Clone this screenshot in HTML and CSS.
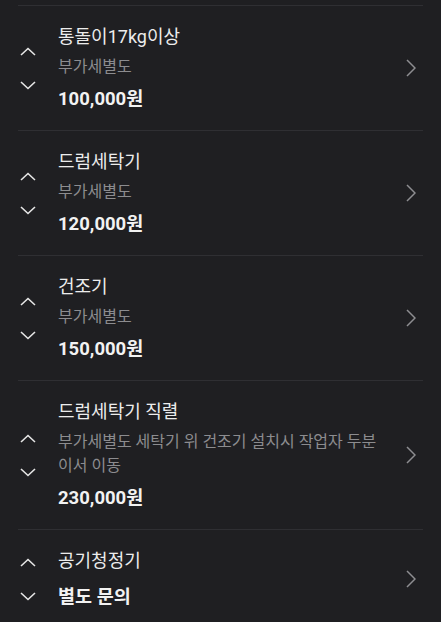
FILE: index.html
```html
<!DOCTYPE html>
<html lang="ko">
<head>
  <meta charset="UTF-8">
  <title>옵션 목록</title>
  <link rel="stylesheet" href="styles.css">
</head>
<body>

  <!-- Option list -->
  <div class="list">

    <div class="item">
      <div class="arrows">
        <svg class="updown" viewBox="0 0 16 9"><path d="M1 8 L8 1.5 L15 8"/></svg>
        <svg class="updown" viewBox="0 0 16 9"><path d="M1 1 L8 7.5 L15 1"/></svg>
      </div>
      <div class="info">
        <div class="name">통돌이17kg이상</div>
        <div class="note">부가세별도</div>
        <div class="price">100,000원</div>
      </div>
      <div class="go">
        <svg viewBox="0 0 10 18"><path d="M1 1 L9 9 L1 17"/></svg>
      </div>
    </div>

    <div class="item">
      <div class="arrows">
        <svg class="updown" viewBox="0 0 16 9"><path d="M1 8 L8 1.5 L15 8"/></svg>
        <svg class="updown" viewBox="0 0 16 9"><path d="M1 1 L8 7.5 L15 1"/></svg>
      </div>
      <div class="info">
        <div class="name">드럼세탁기</div>
        <div class="note">부가세별도</div>
        <div class="price">120,000원</div>
      </div>
      <div class="go">
        <svg viewBox="0 0 10 18"><path d="M1 1 L9 9 L1 17"/></svg>
      </div>
    </div>

    <div class="item">
      <div class="arrows">
        <svg class="updown" viewBox="0 0 16 9"><path d="M1 8 L8 1.5 L15 8"/></svg>
        <svg class="updown" viewBox="0 0 16 9"><path d="M1 1 L8 7.5 L15 1"/></svg>
      </div>
      <div class="info">
        <div class="name">건조기</div>
        <div class="note">부가세별도</div>
        <div class="price">150,000원</div>
      </div>
      <div class="go">
        <svg viewBox="0 0 10 18"><path d="M1 1 L9 9 L1 17"/></svg>
      </div>
    </div>

    <div class="item">
      <div class="arrows">
        <svg class="updown" viewBox="0 0 16 9"><path d="M1 8 L8 1.5 L15 8"/></svg>
        <svg class="updown" viewBox="0 0 16 9"><path d="M1 1 L8 7.5 L15 1"/></svg>
      </div>
      <div class="info">
        <div class="name">드럼세탁기 직렬</div>
        <div class="note">부가세별도 세탁기 위 건조기 설치시 작업자 두분이서 이동</div>
        <div class="price">230,000원</div>
      </div>
      <div class="go">
        <svg viewBox="0 0 10 18"><path d="M1 1 L9 9 L1 17"/></svg>
      </div>
    </div>

    <div class="item">
      <div class="arrows">
        <svg class="updown" viewBox="0 0 16 9"><path d="M1 8 L8 1.5 L15 8"/></svg>
        <svg class="updown" viewBox="0 0 16 9"><path d="M1 1 L8 7.5 L15 1"/></svg>
      </div>
      <div class="info">
        <div class="name">공기청정기</div>
        <div class="price ask">별도 문의</div>
      </div>
      <div class="go">
        <svg viewBox="0 0 10 18"><path d="M1 1 L9 9 L1 17"/></svg>
      </div>
    </div>

  </div>

</body>
</html>
```

FILE: styles.css
```css
html, body {
  margin: 0;
  padding: 0;
  background-color: #1f1f22;
  font-family: Roboto, "Noto Sans CJK KR", sans-serif;
  color: #ececec;
  overflow: hidden;
}

.list {
  padding: 5px 18px 0;
}

.item {
  display: flex;
  align-items: center;
  border-top: 1px solid #2f2f33;
  padding: 18px 0;
}

/* up / down reorder arrows */
.arrows {
  width: 40px;
  display: flex;
  flex-direction: column;
  gap: 25px;
}

.updown {
  width: 16px;
  height: 9px;
  margin-left: 2px;
  fill: none;
  stroke: #e6e6e6;
  stroke-width: 1.6;
}

.info {
  flex: 1;
  display: flex;
  flex-direction: column;
}

.name {
  font-size: 18px;
  line-height: 26px;
}

.note {
  margin-top: 5px;
  font-size: 16px;
  line-height: 24px;
  color: #8c8c8f;
}

.price {
  margin-top: 7px;
  font-size: 18.5px;
  line-height: 26px;
  font-weight: bold;
  color: #f2f2f2;
}

.price.ask {
  margin-top: 10px;
}

.go {
  width: 33px;
  padding-left: 16px;
  box-sizing: border-box;
  display: flex;
}

.go svg {
  width: 10px;
  height: 18px;
  fill: none;
  stroke: #8e8e91;
  stroke-width: 1.5;
}
```
